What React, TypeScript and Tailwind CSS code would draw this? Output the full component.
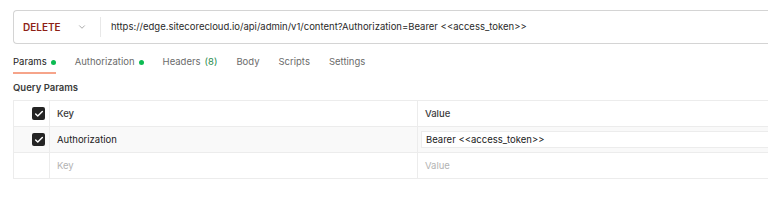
import { ChevronDown, Check } from 'lucide-react'

const tabs = [
  { label: 'Params', dot: true, active: true },
  { label: 'Authorization', dot: true },
  { label: 'Headers', count: '(8)' },
  { label: 'Body' },
  { label: 'Scripts' },
  { label: 'Settings' },
]

function Checkbox() {
  return (
    <span className="w-[13px] h-[13px] rounded-[2px] bg-[#242424] flex items-center justify-center">
      <Check size={10} strokeWidth={3.5} className="text-white" />
    </span>
  )
}

export default function App() {
  return (
    <div
      className="w-[768px] h-[200px] bg-white overflow-hidden text-[9.5px] leading-[14px] text-[#212121]"
      style={{ fontFamily: 'Inter, "Noto Sans", sans-serif' }}
    >
      {/* Request bar */}
      <div className="pt-[10px] pl-[13px]">
        <div className="h-[34px] flex items-center border-y border-l border-[#d4d4d4] rounded-l-[4px]">
          <span className="pl-[9px] w-[58px] font-semibold text-[10px] text-[#8e1f16]">
            DELETE
          </span>
          <ChevronDown size={10} className="text-[#9a9a9a] ml-[5px]" />
          <span className="ml-[13px] w-px h-[20px] bg-[#e8e8e8]" />
          <span className="ml-[10px] whitespace-nowrap text-[#2a2a2a]">
            https://edge.sitecorecloud.io/api/admin/v1/content?Authorization=Bearer &lt;&lt;access_token&gt;&gt;
          </span>
        </div>
      </div>

      {/* Tabs */}
      <div className="flex pl-[13px] mt-[8px] h-[22px]">
        {tabs.map((t) => (
          <div
            key={t.label}
            className={
              'flex items-center gap-[4px] mr-[19px] border-b-2 ' +
              (t.active ? 'border-[#f6a48a] text-[#212121]' : 'border-transparent text-[#6b6b6b]')
            }
          >
            <span>{t.label}</span>
            {t.count && <span className="text-[#1f8a4c]">{t.count}</span>}
            {t.dot && <span className="w-[5px] h-[5px] rounded-full bg-[#0cbb52]" />}
          </div>
        ))}
      </div>

      {/* Query params */}
      <div className="pl-[13px] mt-[7px] font-semibold text-[#3b3b3b]">Query Params</div>

      <div className="ml-[13px] mt-[5px] border-l border-y border-[#ececec]">
        <div className="flex h-[26px] border-b border-[#ececec] font-medium text-[#3b3b3b]">
          <div className="w-[36px] border-r border-[#ececec] flex items-center justify-end pr-[4px]">
            <Checkbox />
          </div>
          <div className="w-[368px] border-r border-[#ececec] flex items-center pl-[7px]">Key</div>
          <div className="flex-1 flex items-center pl-[7px]">Value</div>
        </div>
        <div className="flex h-[26px] border-b border-[#ececec] bg-[#f9f9f9]">
          <div className="w-[36px] border-r border-[#ececec] flex items-center justify-end pr-[4px]">
            <Checkbox />
          </div>
          <div className="w-[368px] border-r border-[#ececec] flex items-center pl-[7px]">Authorization</div>
          <div className="flex-1 flex items-center pl-[3px] py-[4px]">
            <div className="flex-1 h-full bg-white border-y border-l border-[#ececec] flex items-center pl-[4px]">
              Bearer &lt;&lt;access_token&gt;&gt;
            </div>
          </div>
        </div>
        <div className="flex h-[25px] text-[#b3b3b3]">
          <div className="w-[36px] border-r border-[#ececec]" />
          <div className="w-[368px] border-r border-[#ececec] flex items-center pl-[7px]">Key</div>
          <div className="flex-1 flex items-center pl-[7px]">Value</div>
        </div>
      </div>
    </div>
  )
}
